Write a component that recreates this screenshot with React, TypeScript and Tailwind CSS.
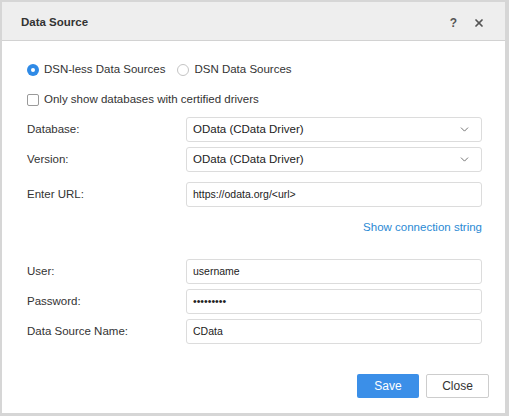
import React from 'react';
import { ChevronDown, X } from 'lucide-react';

const font = { fontFamily: '"Liberation Sans", Arial, sans-serif' };

function Radio({ checked, label }: { checked?: boolean; label: string }) {
  return (
    <label className="flex items-center gap-[5px]">
      {checked ? (
        <span className="flex h-[12px] w-[12px] items-center justify-center rounded-full bg-[#2f8ae6]">
          <span className="h-[4px] w-[4px] rounded-full bg-white" />
        </span>
      ) : (
        <span className="h-[12px] w-[12px] rounded-full border border-[#c4c4c4] bg-white" />
      )}
      <span>{label}</span>
    </label>
  );
}

function Field({ label, children }: { label: string; children: React.ReactNode }) {
  return (
    <div className="grid grid-cols-[159px_296px] items-center">
      <span className="text-[#333]">{label}</span>
      {children}
    </div>
  );
}

function Box({ value, select, small }: { value: string; select?: boolean; small?: boolean }) {
  return (
    <div className="flex h-[25px] items-center justify-between rounded-[3px] border border-[#dcdcdc] bg-white pl-[6px] pr-[10px]">
      <span className={small ? 'text-[10.5px] text-[#222]' : 'text-[11.5px] text-[#222]'}>{value}</span>
      {select && <ChevronDown size={13} strokeWidth={1.5} className="text-[#555]" />}
    </div>
  );
}

export default function App() {
  return (
    <div
      style={font}
      className="flex h-[416px] w-[509px] flex-col border-t-2 border-r-4 border-b-3 border-l-2 border-[#d6d6d6] bg-white text-[11.5px] text-[#333]"
    >
      <div className="flex h-[39px] shrink-0 items-center justify-between border-b border-[#d2d2d2] bg-[#eeeeee] pt-[3px] pl-[19px] pr-[20px]">
        <span className="text-[11.5px] font-bold text-[#333]">Data Source</span>
        <div className="flex items-center gap-[16px] text-[#555]">
          <span className="text-[12px] font-bold">?</span>
          <X size={12} strokeWidth={3.5} />
        </div>
      </div>

      <div className="flex flex-col pl-[25px] pt-[21px]">
        <div className="flex h-[16px] items-center gap-[12px]">
          <Radio checked label="DSN-less Data Sources" />
          <Radio label="DSN Data Sources" />
        </div>

        <label className="mt-[14px] flex h-[16px] items-center gap-[5px]">
          <span className="h-[12px] w-[12px] rounded-[2px] border border-[#9a9a9a] bg-white" />
          <span>Only show databases with certified drivers</span>
        </label>

        <div className="mt-[9px] flex w-[455px] flex-col">
          <Field label="Database:">
            <Box value="OData (CData Driver)" select />
          </Field>
          <div className="mt-[5px]">
            <Field label="Version:">
              <Box value="OData (CData Driver)" select />
            </Field>
          </div>
          <div className="mt-[10px]">
            <Field label="Enter URL:">
              <Box value="https://odata.org/<url>" small />
            </Field>
          </div>
          <div className="mt-[14px] flex h-[14px] items-center justify-end">
            <a className="cursor-pointer text-[11.5px] text-[#2a8ad4]">Show connection string</a>
          </div>

          <div className="mt-[24px]">
            <Field label="User:">
              <Box value="username" small />
            </Field>
          </div>
          <div className="mt-[5px]">
            <Field label="Password:">
              <Box value="•••••••••" small />
            </Field>
          </div>
          <div className="mt-[5px]">
            <Field label="Data Source Name:">
              <Box value="CData" small />
            </Field>
          </div>
        </div>

        <div className="mt-[30px] flex justify-end gap-[7px] pr-[16px]">
          <button className="h-[24px] w-[62px] rounded-[2px] bg-[#3b8fe8] text-[12px] text-white">Save</button>
          <button className="h-[24px] w-[63px] rounded-[2px] border border-[#cdcdcd] bg-white text-[12px] text-[#333]">
            Close
          </button>
        </div>
      </div>
    </div>
  );
}
